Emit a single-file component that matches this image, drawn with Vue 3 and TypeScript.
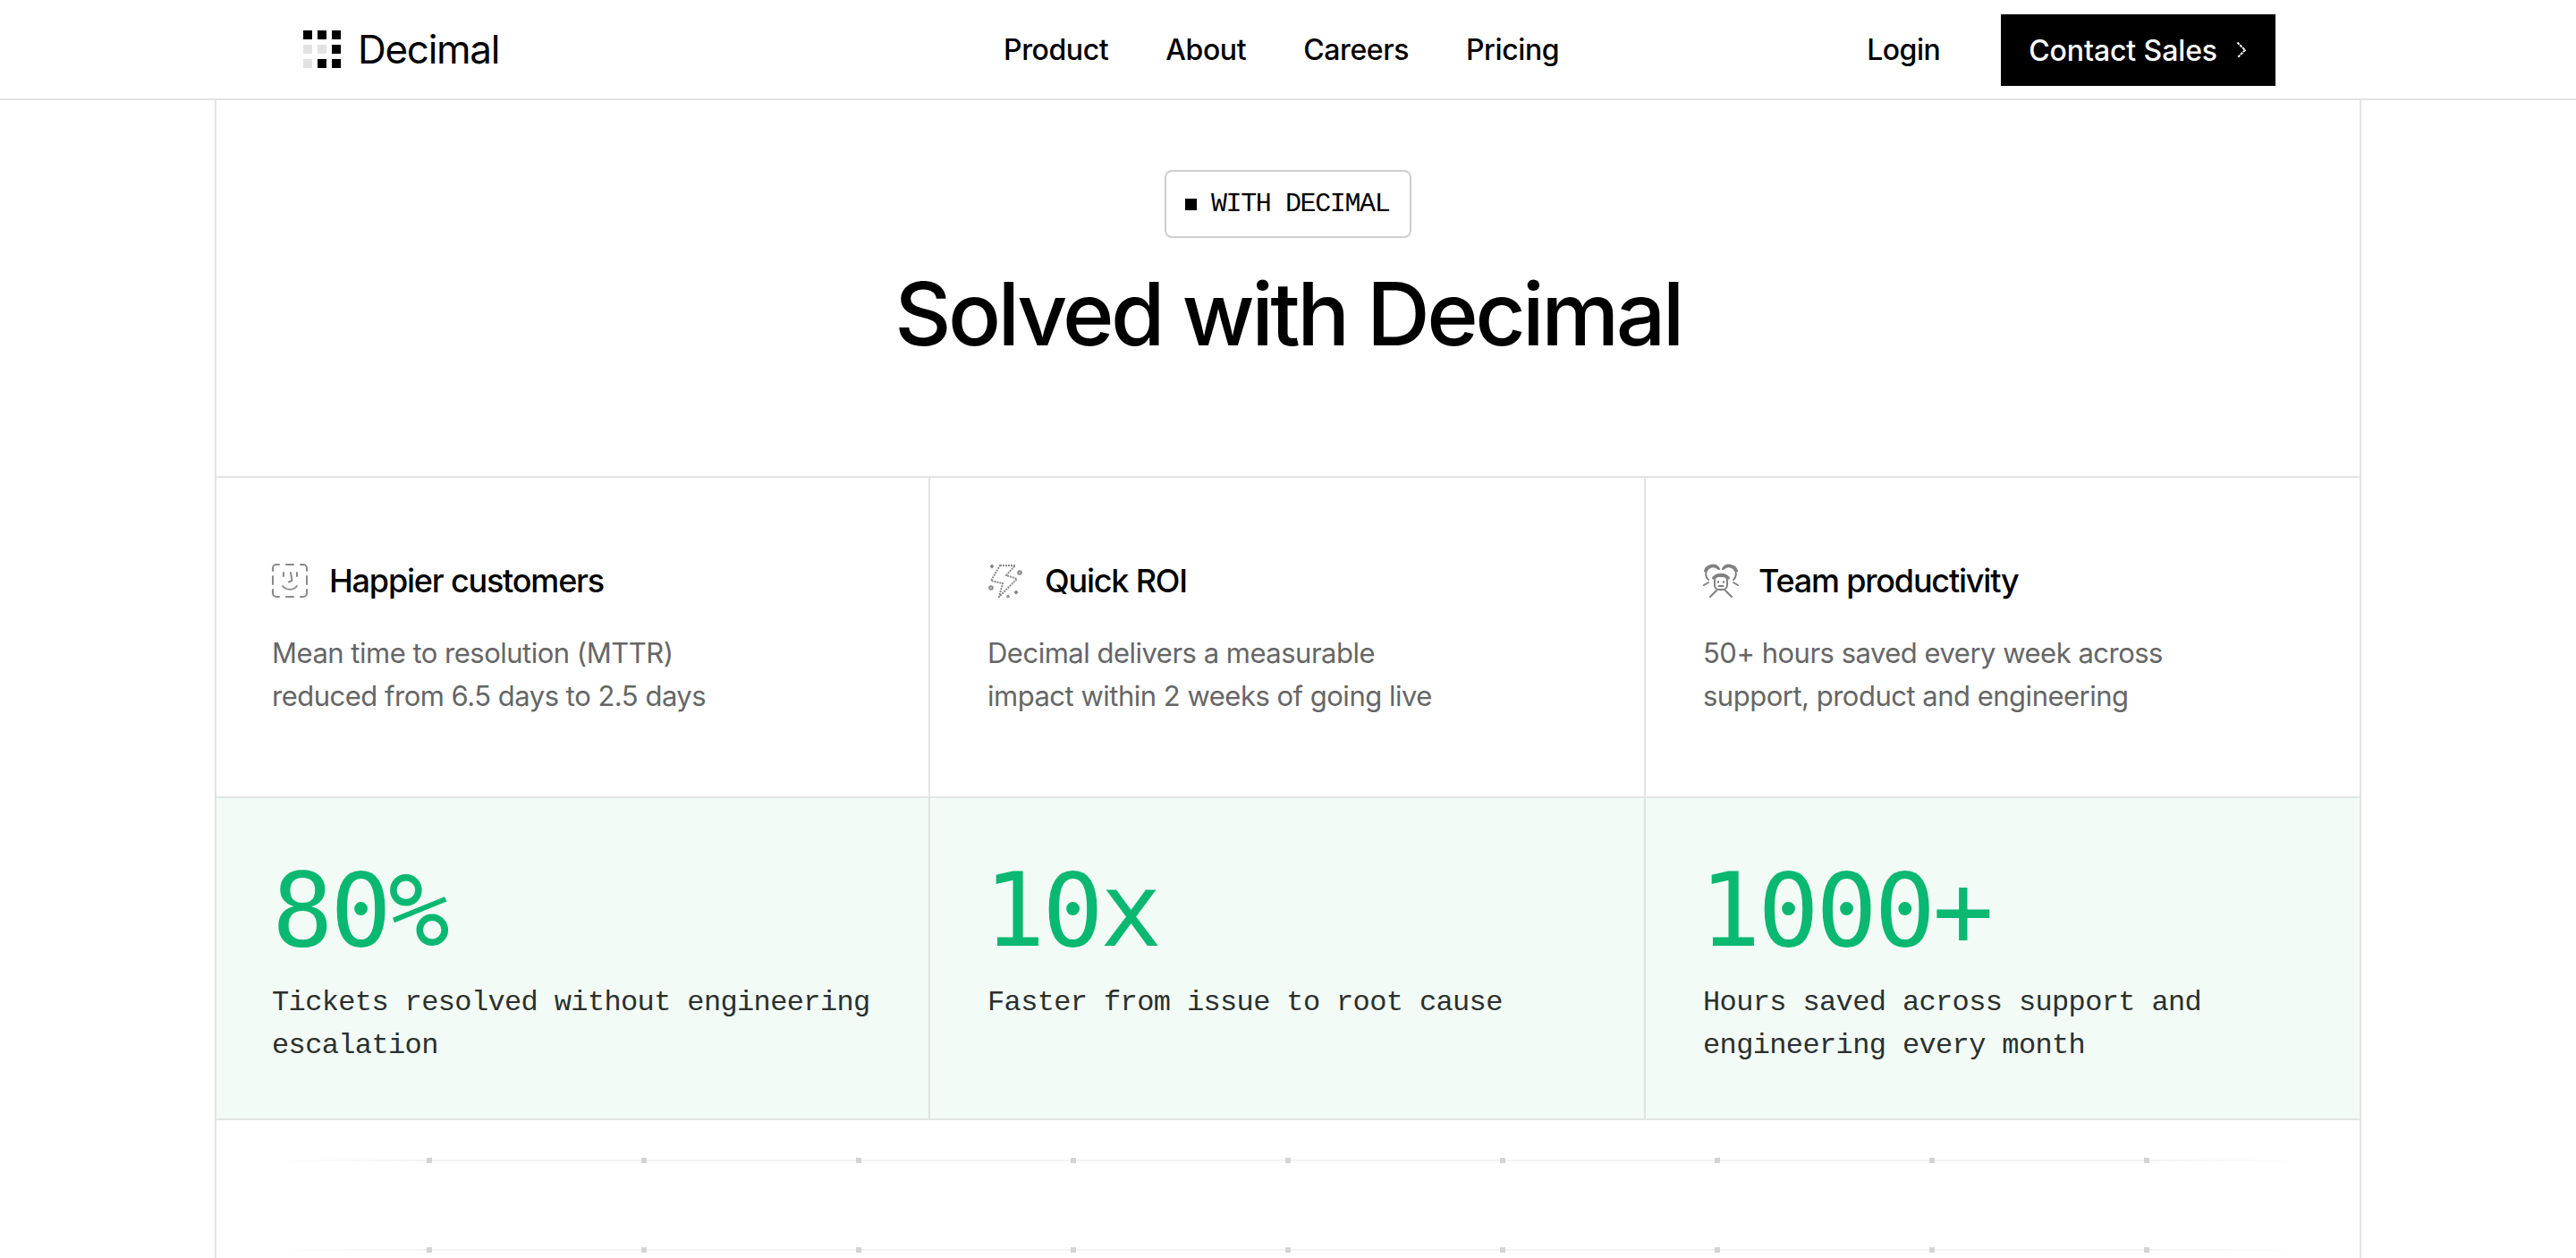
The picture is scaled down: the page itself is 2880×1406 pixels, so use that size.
<template>
  <div class="page">
    <header class="nav">
      <a class="logo">
        <span class="logo-mark">
          <i v-for="(on, i) in logoCells" :key="i" :class="{ dim: !on }"></i>
        </span>
        <span class="logo-text">Decimal</span>
      </a>
      <nav class="links">
        <a v-for="link in links" :key="link">{{ link }}</a>
      </nav>
      <div class="actions">
        <a class="login">Login</a>
        <a class="contact">
          Contact Sales
          <svg width="12" height="20" viewBox="0 0 12 20" fill="none" stroke="#fff" stroke-width="2">
            <path d="M1.500 1.500 10 10l-8.500 8.500" stroke-dasharray="3 1" />
          </svg>
        </a>
      </div>
    </header>

    <main class="frame">
      <section class="intro">
        <div class="badge"><span class="badge-dot"></span>WITH DECIMAL</div>
        <h1>Solved with Decimal</h1>
      </section>

      <section class="row">
        <article v-for="item in benefits" :key="item.title" class="cell benefit">
          <h3>
            <svg v-if="item.icon === 'face'" class="icon" width="42" height="38" viewBox="0 0 42 38" fill="none" stroke="#8a8a8a" stroke-width="2" stroke-linecap="round">
              <path d="M1 8V5a4 4 0 0 1 4-4h3M16 1h8M32 1h3a4 4 0 0 1 4 4v3M39 14v9M39 29v4a4 4 0 0 1-4 4h-3M24 37h-8M8 37H5a4 4 0 0 1-4-4v-4M1 23v-9" />
              <path d="M13 10v4M28 10v4M21 10l1.500 9-3.500 1.500M12 25c4 5 12 5 16 0" />
            </svg>
            <svg v-else-if="item.icon === 'bolt'" class="icon" width="42" height="38" viewBox="-2 0 42 38" fill="none" stroke="#8a8a8a" stroke-width="2">
              <path d="M12 2h17L19 13l12 4-20 20 4-15-13-3L12 2Z" stroke-dasharray="2 1" />
              <path d="M1 3h4M3 1v4M28 32h4M30 30v4" />
              <circle cx="34" cy="10" r="1.800" />
              <circle cx="2" cy="27" r="1.800" />
              <circle cx="21" cy="36.500" r="0.800" />
            </svg>
            <svg v-else class="icon" width="40" height="38" viewBox="0 0 40 38" fill="none" stroke="#808080" stroke-width="2" stroke-linecap="round">
              <path d="M6 18A8.500 8.500 0 1 1 18 6M34 18A8.500 8.500 0 1 0 22 6" />
              <path d="M2.500 8C4 2 13 0 17 5M37.500 8C36 2 27 0 23 5" stroke-width="3" />
              <rect x="13" y="14" width="14" height="15" rx="5" />
              <path d="M11.500 16c4-5 13-5 17 0" stroke-width="3" />
              <path d="M17 20v1M23 20v1M17.500 25h5M1 24l5-3M39 24l-5-3M8 37l7-7M32 37l-7-7" />
            </svg>
            {{ item.title }}
          </h3>
          <p>{{ item.lines[0] }}<br />{{ item.lines[1] }}</p>
        </article>
      </section>

      <section class="row stats">
        <article v-for="stat in stats" :key="stat.value" class="cell stat">
          <div class="value">{{ stat.value }}</div>
          <p>{{ stat.text }}</p>
        </article>
      </section>

      <section class="dots">
        <div v-for="r in 2" :key="r" class="dot-row">
          <i v-for="d in 9" :key="d"></i>
        </div>
      </section>
    </main>
  </div>
</template>

<script setup lang="ts">
const logoCells = [1, 1, 1, 0, 0, 1, 0, 1, 1]
const links = ['Product', 'About', 'Careers', 'Pricing']

const benefits = [
  {
    icon: 'face',
    title: 'Happier customers',
    lines: ['Mean time to resolution (MTTR)', 'reduced from 6.5 days to 2.5 days'],
  },
  {
    icon: 'bolt',
    title: 'Quick ROI',
    lines: ['Decimal delivers a measurable', 'impact within 2 weeks of going live'],
  },
  {
    icon: 'team',
    title: 'Team productivity',
    lines: ['50+ hours saved every week across', 'support, product and engineering'],
  },
]

const stats = [
  { value: '80%', text: 'Tickets resolved without engineering escalation' },
  { value: '10x', text: 'Faster from issue to root cause' },
  { value: '1000+', text: 'Hours saved across support and engineering every month' },
]
</script>

<style>
html,
body {
  margin: 0;
  height: 1406px;
  overflow: hidden;
  background: #fff;
}
</style>

<style scoped>
.page {
  font-family: Inter, 'Liberation Sans', sans-serif;
  color: #000;
  height: 1406px;
  overflow: hidden;
}

.nav {
  display: grid;
  grid-template-columns: 783px auto 1fr;
  align-items: center;
  height: 110px;
  padding: 0 336px 0 339px;
  border-bottom: 2px solid #e3e3e3;
}

.logo {
  display: flex;
  align-items: center;
  gap: 19px;
}

.logo-mark {
  display: grid;
  grid-template-columns: repeat(3, 10px);
  grid-auto-rows: 10px;
  gap: 6px;
}

.logo-mark i {
  background: #000;
}

.logo-mark i.dim {
  background: #e2e2e2;
}

.logo-text {
  font-size: 44px;
  font-weight: 400;
  letter-spacing: -1.300px;
  line-height: 1;
}

.links {
  display: flex;
  gap: 64px;
  font-size: 32px;
  font-weight: 500;
  letter-spacing: -0.4px;
}

.actions {
  display: flex;
  align-items: center;
  justify-content: flex-end;
  gap: 68px;
  font-size: 32px;
  font-weight: 500;
  letter-spacing: -0.5px;
}

.contact {
  display: flex;
  align-items: center;
  gap: 21px;
  height: 80px;
  margin-top: 2px;
  padding: 0 32px 0 31px;
  background: #000;
  color: #fff;
  letter-spacing: -0.1px;
}

.frame {
  width: 2400px;
  height: 1294px;
  margin: 0 auto;
  box-sizing: border-box;
  border-left: 2px solid #e3e3e3;
  border-right: 2px solid #e3e3e3;
}

.intro {
  display: flex;
  flex-direction: column;
  align-items: center;
  height: 422px;
  box-sizing: border-box;
  padding-top: 78px;
  border-bottom: 2px solid #e3e3e3;
}

.badge {
  display: flex;
  align-items: center;
  gap: 16px;
  width: 276px;
  height: 76px;
  box-sizing: border-box;
  padding: 0 0 0 21px;
  border: 2px solid #cfcfcf;
  border-radius: 8px;
  font-family: 'Liberation Mono', monospace;
  font-size: 30px;
  letter-spacing: -1.400px;
}

.badge-dot {
  width: 13px;
  height: 13px;
  background: #000;
}

h1 {
  margin: 22px 0 0;
  font-size: 98px;
  font-weight: 500;
  line-height: 125px;
  letter-spacing: -3.600px;
}

.row {
  display: grid;
  grid-template-columns: 798px 800px 1fr;
}

.cell {
  box-sizing: border-box;
  padding-left: 64px;
  border-right: 2px solid #e3e3e3;
}

.cell:first-child {
  padding-left: 62px;
}

.cell:last-child {
  border-right: 0;
}

.benefit {
  height: 356px;
  padding-top: 91px;
}

.benefit h3 {
  display: flex;
  align-items: center;
  gap: 22px;
  margin: 0 0 33px;
  font-size: 36px;
  font-weight: 500;
  line-height: 48px;
  letter-spacing: -1.200px;
}

.icon {
  flex: none;
}

.benefit p {
  margin: 0;
  font-size: 31px;
  line-height: 48px;
  letter-spacing: -0.5px;
  color: #666;
}

.stats {
  background: #f2fbf6;
  border-top: 2px solid #e1e6e3;
  border-bottom: 2px solid #e1e6e3;
}

.stat {
  height: 358px;
  padding-top: 66px;
  padding-right: 40px;
  border-color: #dde3df;
}

.value {
  margin-left: -4px;
  font-family: 'DejaVu Sans Mono', monospace;
  font-size: 114px;
  line-height: 120px;
  letter-spacing: -3.500px;
  color: #0bb872;
}

.stat:first-child .value {
  margin-left: 0;
}

.stat p {
  margin: 19px 0 0;
  font-family: 'Liberation Mono', monospace;
  font-size: 32px;
  line-height: 48px;
  letter-spacing: -0.63px;
  color: #2b302d;
}

.dots {
  display: flex;
  flex-direction: column;
  gap: 94px;
  padding: 42px 40px 0;
}

.dot-row {
  display: flex;
  justify-content: space-between;
  height: 6px;
  padding: 0 195px;
  background: linear-gradient(90deg, transparent 1%, #f3f3f3 8%, #f3f3f3 92%, transparent 99%) center / 100% 2px no-repeat;
}

.dot-row i {
  width: 6px;
  height: 6px;
  background: #d4d4d4;
}
</style>
